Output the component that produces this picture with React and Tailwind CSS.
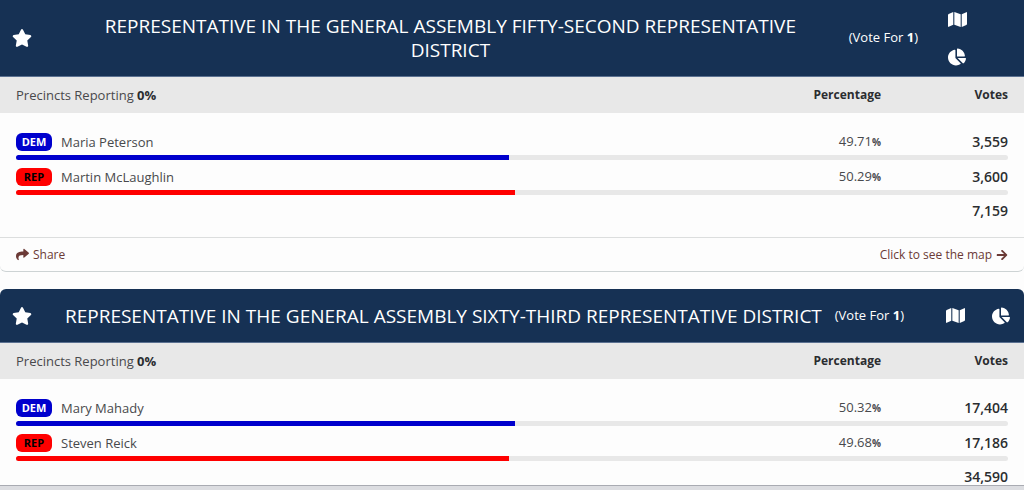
import React, { useState } from 'react';
import { FaStar, FaMap, FaChartPie, FaShare, FaArrowRight } from 'react-icons/fa';
import clsx from 'clsx';

const contests = [
  {
    id: 'house-52',
    title: 'REPRESENTATIVE IN THE GENERAL ASSEMBLY FIFTY-SECOND REPRESENTATIVE DISTRICT',
    voteFor: 1,
    reporting: '0%',
    total: '7,159',
    stacked: true,
    showLinks: true,
    candidates: [
      { name: 'Maria Peterson', party: 'DEM', percent: 49.71, votes: '3,559' },
      { name: 'Martin McLaughlin', party: 'REP', percent: 50.29, votes: '3,600' },
    ],
  },
  {
    id: 'house-63',
    title: 'REPRESENTATIVE IN THE GENERAL ASSEMBLY SIXTY-THIRD REPRESENTATIVE DISTRICT',
    voteFor: 1,
    reporting: '0%',
    total: '34,590',
    stacked: false,
    showLinks: false,
    candidates: [
      { name: 'Mary Mahady', party: 'DEM', percent: 50.32, votes: '17,404' },
      { name: 'Steven Reick', party: 'REP', percent: 49.68, votes: '17,186' },
    ],
  },
];

const partyBadge = {
  DEM: 'bg-[#0000cd] text-white',
  REP: 'bg-[#ff0000] text-black',
};

const partyBar = {
  DEM: 'bg-[#0000cd]',
  REP: 'bg-[#ff0000]',
};

const ContestHeader = ({ contest }) => {
  const [favorite, setFavorite] = useState(false);

  return (
    <header
      className={clsx(
        'flex items-center border-b border-[#5b7191] bg-[#163154] pl-3 text-white',
        contest.stacked ? 'pr-11' : 'rounded-t-md'
      )}
    >
      <button
        type="button"
        aria-label="Add to favorites"
        aria-pressed={favorite}
        onClick={() => setFavorite(!favorite)}
        className="shrink-0"
      >
        <FaStar className="h-[18px] w-5" />
      </button>
      <h2
        className={clsx(
          'flex-1 text-center text-[19px] leading-6',
          contest.stacked ? 'pl-10 pr-5' : 'pl-5'
        )}
      >
        {contest.title}
      </h2>
      <span className="shrink-0 text-[13px]">
        (Vote For <b className="font-bold">{contest.voteFor}</b>)
      </span>
      <div className={clsx('flex shrink-0', contest.stacked ? 'ml-4 flex-col' : 'ml-7')}>
        <button
          type="button"
          aria-label="Map"
          className={clsx('flex w-[46px] items-center justify-center', contest.stacked ? 'h-[38px]' : 'h-[53px]')}
        >
          <FaMap className="h-[17px] w-[19px]" />
        </button>
        <button
          type="button"
          aria-label="Chart"
          className={clsx('flex w-[46px] items-center justify-center', contest.stacked ? 'h-[38px]' : 'h-[53px]')}
        >
          <FaChartPie className="h-[18px] w-[18px]" />
        </button>
      </div>
    </header>
  );
};

const CandidateRows = ({ candidate }) => (
  <>
    <tr className="h-[27px]">
      <td className="pl-4">
        <div className="flex items-center gap-[9px]">
          <span
            className={clsx(
              'flex h-[18px] w-9 items-center justify-center rounded-md text-[11px] font-bold',
              partyBadge[candidate.party]
            )}
          >
            {candidate.party}
          </span>
          {candidate.name}
        </div>
      </td>
      <td className="text-right">
        {candidate.percent}
        <b className="text-[10px]">%</b>
      </td>
      <td className="pr-4 text-right text-sm font-semibold text-[#2b2d30]">{candidate.votes}</td>
    </tr>
    <tr className="h-2">
      <td colSpan={3} className="px-4 align-top">
        <div className="h-[5px] overflow-hidden rounded-full bg-[#e8e8e8]">
          <div
            className={clsx('h-full', partyBar[candidate.party])}
            style={{ width: `${candidate.percent}%` }}
          />
        </div>
      </td>
    </tr>
  </>
);

const ContestCard = ({ contest }) => (
  <section
    className={clsx('rounded-md bg-[#fdfdfd]', contest.showLinks && 'border-b border-[#cdd3d4]')}
  >
    <ContestHeader contest={contest} />
    <table className="w-full table-fixed border-collapse text-[13px] leading-5">
      <colgroup>
        <col />
        <col className="w-32" />
        <col className="w-[143px]" />
      </colgroup>
      <thead className="bg-[#e8e8e8]">
        <tr className="h-9">
          <th className="pl-4 text-left font-normal">
            Precincts Reporting <b className="font-bold text-[#2b2d30]">{contest.reporting}</b>
          </th>
          <th className="text-right text-xs font-bold text-[#2b2d30]">Percentage</th>
          <th className="pr-4 text-right text-xs font-bold text-[#2b2d30]">Votes</th>
        </tr>
      </thead>
      <tbody>
        <tr className="h-[15px]" aria-hidden="true">
          <td colSpan={3} />
        </tr>
        {contest.candidates.map((candidate) => (
          <CandidateRows key={candidate.name} candidate={candidate} />
        ))}
      </tbody>
      <tfoot>
        <tr className="h-[26px]">
          <td colSpan={3} className="pr-4 text-right text-sm font-semibold text-[#2b2d30]">
            {contest.total}
          </td>
        </tr>
      </tfoot>
    </table>
    {contest.showLinks && (
      <footer className="mt-[13px] flex h-[34px] items-center justify-between border-t border-[#dcdede] px-4 text-xs text-[#6b3a36]">
        <a href="#share" className="flex items-center gap-1">
          <FaShare className="h-[13px] w-[13px]" />
          Share
        </a>
        <a href="#map" className="flex items-center gap-1">
          Click to see the map
          <FaArrowRight className="h-3 w-3" />
        </a>
      </footer>
    )}
  </section>
);

const App = () => (
  <div className="flex h-screen flex-col bg-[#fdfdfd] font-['Open_Sans','Noto_Sans',sans-serif] text-[#48494c]">
    <main className="flex min-h-0 flex-1 flex-col gap-[17px] overflow-y-auto">
      {contests.map((contest) => (
        <ContestCard key={contest.id} contest={contest} />
      ))}
    </main>
    <div className="h-[5px] shrink-0 border-t border-[#a9abb2] bg-[#dcdde1]" />
  </div>
);

export default App;
